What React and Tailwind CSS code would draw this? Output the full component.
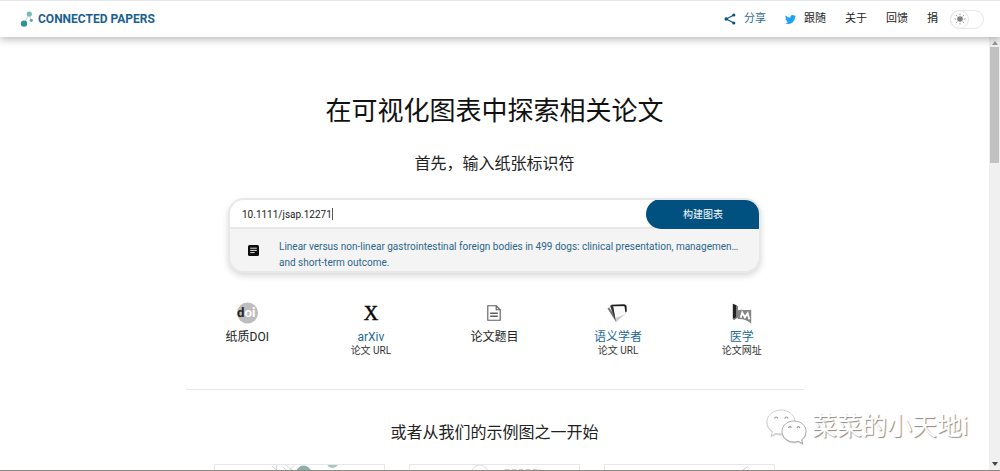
import { useState } from 'react'

const Logo = () => (
    <svg className="h-4 w-3.5" viewBox="0 0 14 16" aria-hidden="true">
        <path d="M4 12.5 9 3M9 3l2 6.5" stroke="#b5d3d3" strokeWidth="0.8" fill="none" />
        <circle cx="9.3" cy="3" r="2.6" fill="#7ab8b5" />
        <circle cx="11.3" cy="9.3" r="1.6" fill="#5aa6a5" />
        <circle cx="4" cy="12.6" r="3.2" fill="#2e9391" />
    </svg>
)

const ShareIcon = () => (
    <svg className="size-3" viewBox="0 0 12 12" fill="#0a4f80" aria-hidden="true">
        <path d="M10 2 2.2 6 10 10" stroke="#0a4f80" strokeWidth="1.1" fill="none" />
        <circle cx="9.8" cy="2" r="1.6" />
        <circle cx="2.2" cy="6" r="1.7" />
        <circle cx="9.8" cy="10" r="1.6" />
    </svg>
)

const TwitterIcon = () => (
    <svg className="size-[11px]" viewBox="0 0 24 24" fill="#1da1f2" aria-hidden="true">
        <path d="M23.95 4.57a10 10 0 0 1-2.82.77 4.96 4.96 0 0 0 2.16-2.72 9.9 9.9 0 0 1-3.12 1.19 4.92 4.92 0 0 0-8.39 4.48A13.93 13.93 0 0 1 1.64 3.16a4.92 4.92 0 0 0 1.52 6.57 4.9 4.9 0 0 1-2.23-.61v.06a4.92 4.92 0 0 0 3.95 4.83 5 5 0 0 1-2.21.08 4.94 4.94 0 0 0 4.6 3.42A9.87 9.87 0 0 1 0 19.54a13.94 13.94 0 0 0 7.55 2.21c9.05 0 14-7.5 14-13.98 0-.21 0-.42-.02-.63a9.94 9.94 0 0 0 2.42-2.57z" />
    </svg>
)

const SunIcon = () => (
    <svg className="size-3" viewBox="0 0 12 12" aria-hidden="true">
        <circle cx="6" cy="6" r="2.8" fill="#808080" />
        <path
            d="M6 .5v1.7M6 9.8v1.7M.5 6h1.7M9.8 6h1.7M2.1 2.1l1.2 1.2M8.7 8.7l1.2 1.2M2.1 9.9l1.2-1.2M8.7 3.3l1.2-1.2"
            stroke="#999"
            strokeWidth="1"
        />
    </svg>
)

const PaperIcon = () => (
    <svg className="mt-1.5 size-[11px] shrink-0" viewBox="0 0 11 11" aria-hidden="true">
        <rect width="11" height="11" rx="1.5" fill="#0c0c0c" />
        <path d="M2.2 3.2h6.6M2.2 5.4h6.6M2.2 7.6h4.4" stroke="#e5e5e5" strokeWidth="1" />
    </svg>
)

const DoiIcon = () => (
    <svg className="size-[22px]" viewBox="0 0 22 22" aria-hidden="true">
        <circle cx="11.5" cy="11" r="10.5" fill="#bdbdbd" />
        <text x="1" y="15" fontSize="13" fontWeight="900" fontFamily="Lato, sans-serif">
            <tspan fill="#222">d</tspan>
            <tspan fill="#fff">oi</tspan>
        </text>
    </svg>
)

const TitleIcon = () => (
    <svg className="h-4 w-3.5" viewBox="0 0 14 16" fill="none" stroke="#5c5c5c" strokeWidth="1.1" aria-hidden="true">
        <path d="M.8.8h8.4l4 4v10.4H.8z" />
        <path d="M9.2.8v4h4" />
        <path d="M3.2 8.3h7.6M3.2 11.2h7.6" strokeWidth="1.4" />
    </svg>
)

const ScholarIcon = () => (
    <svg className="h-5 w-[23px]" viewBox="0 0 23 20" aria-hidden="true">
        <path d="M.5 5.5 9 19 5 2 3.200 2.800 5.500 9.500 2.200 4.200z" fill="#777" />
        <path d="M3.200 2.800 9 19 6 1.800z" fill="#333" />
        <path d="M4.200 1.800 17.500 1.200l2 1.600.3 5.600-1.600 1-.9-6L7 3.500z" fill="#1c1c1c" />
        <path d="M7 3.500 17.200 3.300 18.300 9 9.300 15z" fill="#fafafa" />
        <path d="M9 19.500 9.200 14.500c4-1 9-3.500 13.500-7C18 11 13 15 9 19.500z" fill="#ccc" />
    </svg>
)

const PubmedIcon = () => (
    <svg className="h-[21px] w-5" viewBox="0 0 20 21" aria-hidden="true">
        <path d="M.8.800 4.500 2.200v12L.800 16z" fill="#222" />
        <path d="M4.500 2.200 5.800 3.200v11.300L2 17l-1.200-1 3.700-1.800z" fill="#666" />
        <path d="M5.800 7.500C9 5.500 13 8 19.200 6.700v14C16 17.500 11.500 15.700 5.800 16z" fill="#858585" />
        <path d="m8.700 14.800 1.500-5.300 2.700 4.700 2.800-4 1.600 6.200" stroke="#fff" strokeWidth="1.800" fill="none" />
    </svg>
)

const WechatIcon = () => (
    <svg
        className="h-9 w-[42px] [filter:drop-shadow(0_1px_0_#aaa8)]"
        viewBox="0 0 42 36"
        fill="#fff"
        stroke="#c8c8c8"
        strokeWidth="0.8"
        aria-hidden="true"
    >
        <path d="M15 1C7.300 1 1 6.200 1 13c0 4 2.200 7.200 5.600 9.500L5 26.800l5.200-2.500c1.500.5 3.100.7 4.800.7 7.700 0 14-5.200 14-12S22.700 1 15 1z" />
        <path d="M28 12c-6.800 0-12 4.500-12 10.300S21.200 33 28 33c1.500 0 3-.2 4.300-.7l4.600 2.200-1.300-3.700c2.700-2 4.400-5 4.400-8.500C40 16.500 34.800 12 28 12z" stroke="#999" />
        <path d="M8.500 9.500c.5-2 2.700-2 3.200 0M18.800 9.500c.5-2 2.700-2 3.200 0M22.500 19c.4-1.700 2.400-1.700 2.800 0M31 19c.4-1.700 2.400-1.700 2.800 0" stroke="#999" strokeWidth="1.200" fill="none" />
    </svg>
)

const sources = [
    { icon: <DoiIcon />, name: '纸质DOI' },
    { icon: <span className="font-['Liberation_Serif',serif] text-xl leading-5 text-black [-webkit-text-stroke:0.5px_#111]">X</span>, name: 'arXiv', hint: '论文 URL', link: true },
    { icon: <TitleIcon />, name: '论文题目' },
    { icon: <ScholarIcon />, name: '语义学者', hint: '论文 URL', link: true },
    { icon: <PubmedIcon />, name: '医学', hint: '论文网址', link: true },
]

const Header = () => (
    <header className="relative z-10 flex h-[37px] shrink-0 items-center justify-between border-t border-gray-200 bg-white pr-4 pl-5 shadow-[0_2px_8px_rgba(0,0,0,0.3)]">
        <a href="#" className="flex items-center gap-1 text-xs font-bold text-[#1a5f92]">
            <Logo />
            CONNECTED PAPERS
        </a>
        <nav className="flex items-center gap-[19px] text-[11px] text-[#222]">
            <a href="#share" className="flex items-center gap-2 text-[#2d6d94]">
                <ShareIcon />
                分享
            </a>
            <a href="#follow" className="flex items-center gap-2">
                <TwitterIcon />
                跟随
            </a>
            <a href="#about">关于</a>
            <a href="#feedback">回馈</a>
            <div className="flex items-center gap-3">
                <a href="#donate">捐</a>
                <button type="button" aria-label="Theme" className="h-[19px] w-[34px] rounded-full border border-gray-200 bg-white">
                    <span className="-my-px -ml-px flex size-[19px] items-center justify-center rounded-full border border-gray-200">
                        <SunIcon />
                    </span>
                </button>
            </div>
        </nav>
    </header>
)

const Search = () => {
    const [query, setQuery] = useState('10.1111/jsap.12271')

    return (
        <form className="mx-auto mt-[23px] w-full max-w-[533px] overflow-hidden rounded-2xl border-2 border-[#e8e8e8] bg-[#f4f4f4] shadow-[0_3px_6px_rgba(0,0,0,0.15)]">
            <div className="-mt-px -mr-px flex h-[30px] border-b-2 border-[#e8e8e8] bg-white">
                <label className="flex flex-1 items-center pt-0.5 pl-3">
                    <input
                        type="text"
                        aria-label="论文"
                        value={query}
                        onChange={(e) => setQuery(e.target.value)}
                        className="field-sizing-content text-[10px] text-[#222] outline-none"
                    />
                    <span className="h-3 w-px bg-[#555]"></span>
                </label>
                <button type="button" className="-mb-0.5 w-[114px] rounded-l-full rounded-tr-2xl bg-[#005080] text-[10px] text-white">
                    构建图表
                </button>
            </div>
            <a href="#paper" className="flex items-start gap-5 pt-2.5 pr-1 pl-[18px] text-[10px] leading-4 text-[#2b668a]">
                <PaperIcon />
                <span className="min-w-0">
                    <span className="block whitespace-nowrap">
                        Linear versus non-linear gastrointestinal foreign bodies in 499 dogs: clinical presentation, managemen…
                    </span>
                    <span className="block">and short-term outcome.</span>
                </span>
            </a>
        </form>
    )
}

const Sources = () => (
    <ul className="mx-auto mt-7 grid w-full max-w-[618px] grid-cols-5 border-b border-gray-200 pb-8">
        {sources.map(({ icon, name, hint, link }) => (
            <li key={name} className="flex flex-col items-center text-center">
                <div className="flex h-6 items-center">{icon}</div>
                {link ? (
                    <a href="#source" className="mt-1 text-xs leading-4 text-[#1f6a96]">{name}</a>
                ) : (
                    <span className="mt-1 text-xs leading-4 text-[#222]">{name}</span>
                )}
                {hint && <span className="text-[10px] leading-3 text-[#333]">{hint}</span>}
            </li>
        ))}
    </ul>
)

const Examples = () => (
    <div className="mx-auto mt-5 grid w-full max-w-[562px] grid-cols-3 gap-6">
        <div className="h-40 border border-gray-200">
            <svg className="w-full" viewBox="0 0 170 20" aria-hidden="true">
                <path d="m57 1 6 5M62 0l-1 8M68 2l5 4M71 0l9 7M80 0l-8 8" stroke="#c4cccc" strokeWidth="0.8" />
                <circle cx="89" cy="8" r="7.500" fill="#8db0ad" />
                <circle cx="118" cy="-3" r="6" fill="#a9c5c2" />
            </svg>
        </div>
        <div className="h-40 border border-gray-200">
            <svg className="w-full" viewBox="0 0 170 20" aria-hidden="true">
                <circle cx="70" cy="8" r="8" fill="none" stroke="#ddd" />
                <path d="M95 5h36" stroke="#ccc" strokeWidth="2" strokeDasharray="5 2" />
            </svg>
        </div>
        <div className="h-40 border border-gray-200">
            <svg className="w-full" viewBox="0 0 170 20" aria-hidden="true">
                <path d="m136 7 8-6" stroke="#ccc" />
            </svg>
        </div>
    </div>
)

const Scrollbar = () => (
    <div className="flex w-[11px] shrink-0 flex-col items-center justify-between bg-[#f0f0f0] pt-1 pb-1" aria-hidden="true">
        <div className="flex w-full flex-col items-center gap-0.5">
            <svg className="h-1 w-1.5" viewBox="0 0 6 4">
                <path d="M3 0 6 4H0z" fill="#999" />
            </svg>
            <div className="h-[116px] w-[9px] bg-[#c1c1c1]"></div>
        </div>
        <svg className="h-1 w-1.5" viewBox="0 0 6 4">
            <path d="M0 0h6L3 4z" fill="#444" />
        </svg>
    </div>
)

const App = () => {
    return (
        <div className="flex h-screen flex-col overflow-hidden border-b border-[#8c8884] bg-white font-[Roboto,'Noto_Sans_CJK_SC',sans-serif]">
            <Header />
            <div className="flex min-h-0 flex-1">
                <main className="min-w-0 flex-1 overflow-hidden">
                    <h1 className="mt-14 text-center text-[26px] leading-9 text-[#111]">在可视化图表中探索相关论文</h1>
                    <h2 className="mt-6 text-center text-base leading-[22px] text-[#222]">首先，输入纸张标识符</h2>
                    <Search />
                    <Sources />
                    <h2 className="mt-8 text-center text-base leading-[22px] text-[#222]">或者从我们的示例图之一开始</h2>
                    <Examples />
                </main>
                <Scrollbar />
            </div>
            <div className="absolute right-8 bottom-[26px] flex items-center gap-1">
                <WechatIcon />
                <span className="text-[25px] leading-9 text-white [text-shadow:1px_1px_1px_#888]">菜菜的小天地i</span>
            </div>
        </div>
    )
}

export default App
